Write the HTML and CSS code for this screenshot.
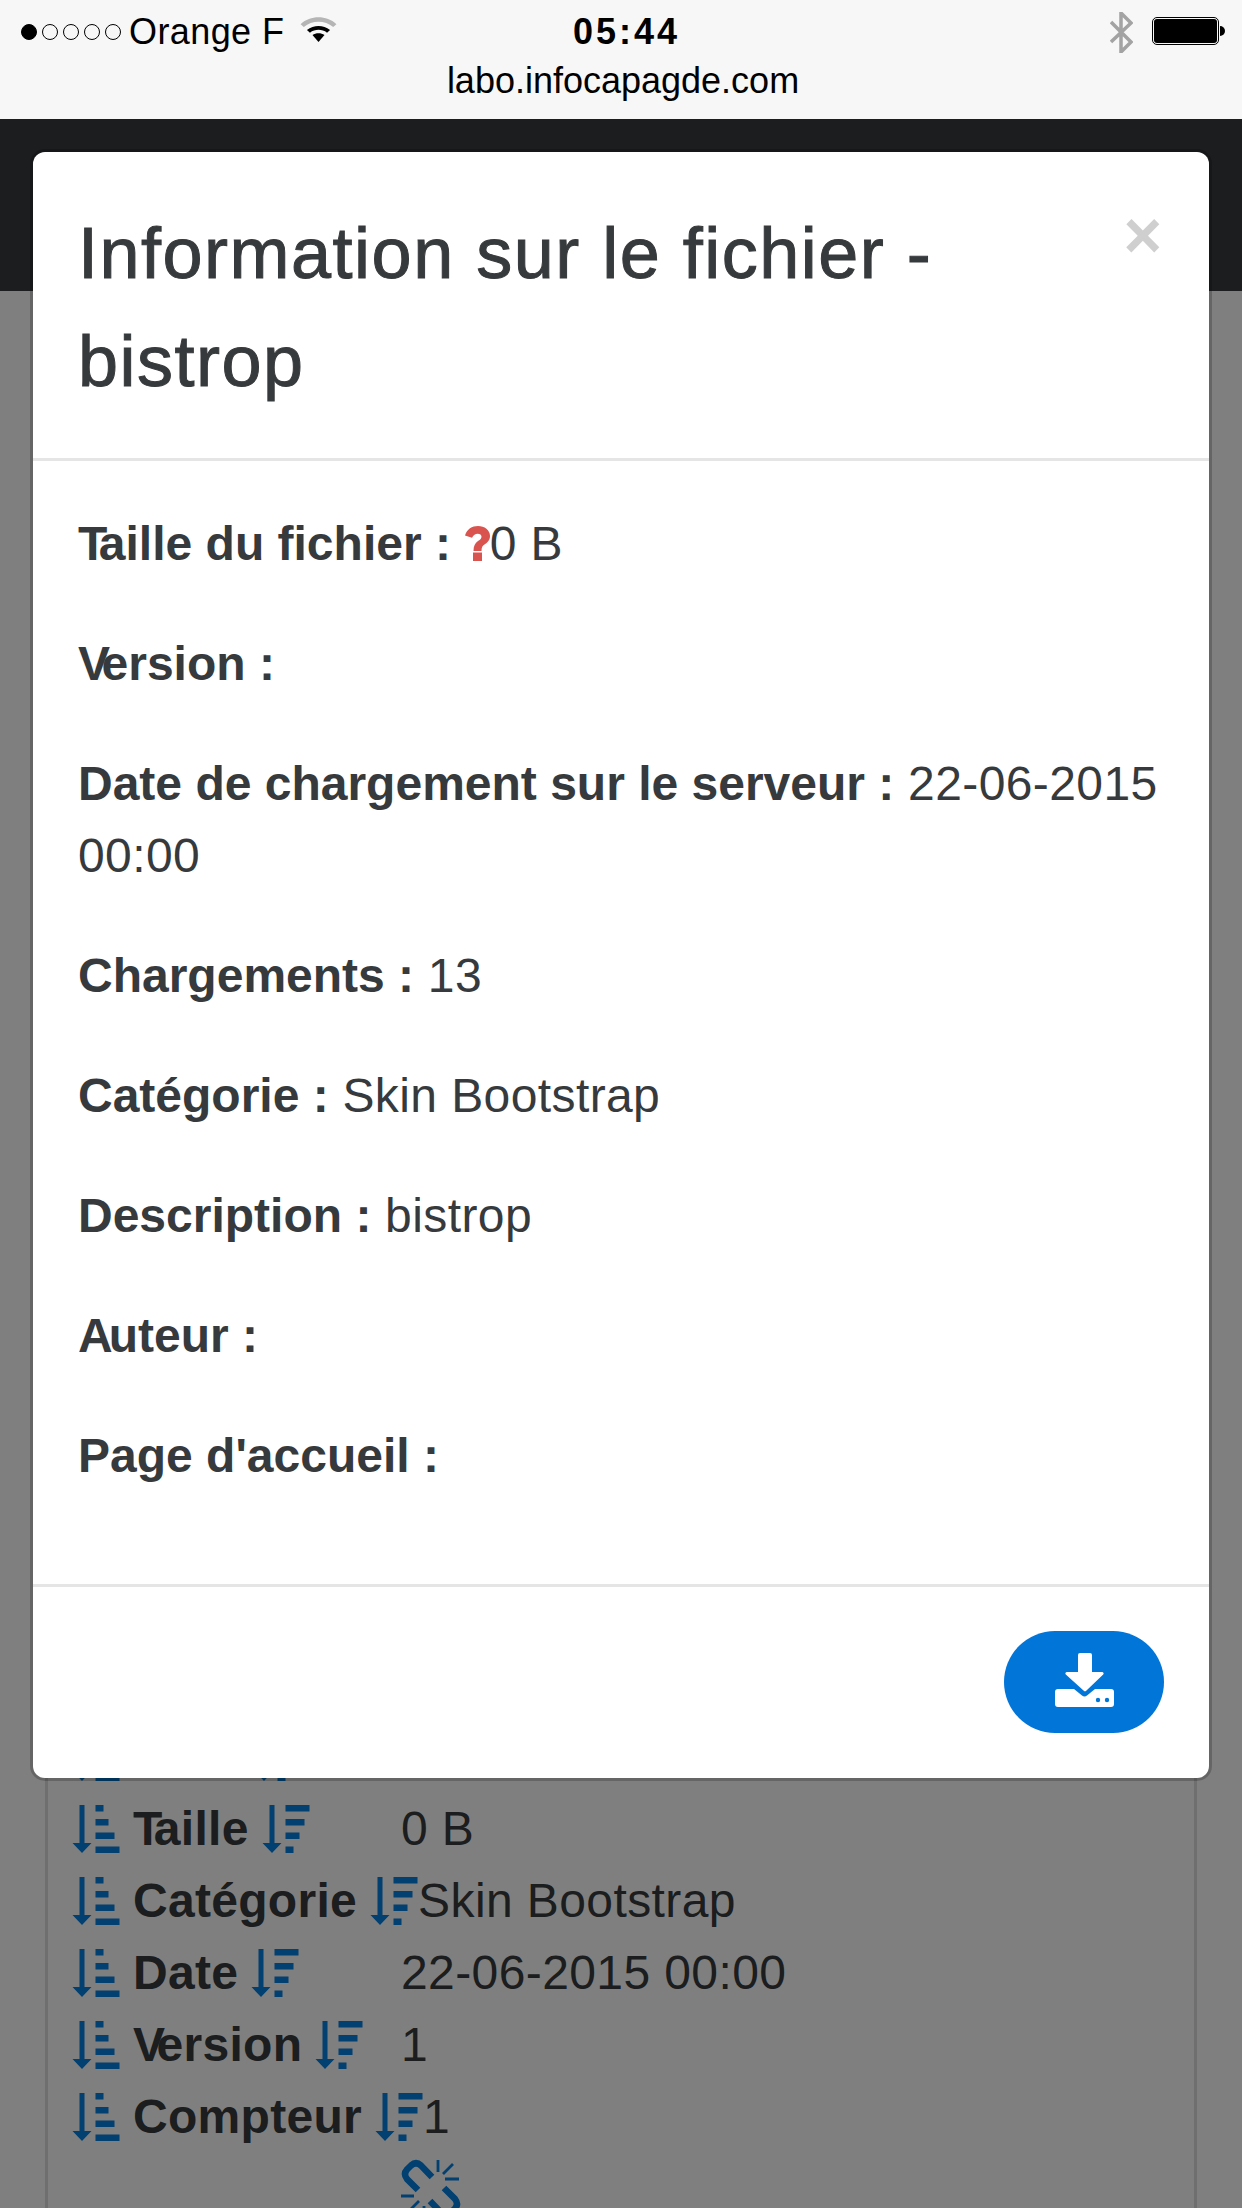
FILE: index.html
```html
<!DOCTYPE html>
<html lang="fr">
<head>
<meta charset="utf-8">
<title>Information sur le fichier</title>
<link rel="stylesheet" href="styles.css">
</head>
<body>
<svg class="defs" width="0" height="0" aria-hidden="true">
  <symbol id="sort-asc" viewBox="0 0 48 48">
    <path d="M7.500 0h5v38h7L10 48 0.500 38h7z"/>
    <path d="M23.500 0h8v6.500h-8zM23.500 14h13v6.500h-13zM23.500 27.500h19v6.500h-19zM23.500 41.500h24v6.500h-24z"/>
  </symbol>
  <symbol id="sort-desc" viewBox="0 0 48 48">
    <path d="M7.500 0h5v38h7L10 48 0.500 38h7z"/>
    <path d="M23.500 0h24v6.500h-24zM23.500 14h19v6.500h-19zM23.500 27.500h14v6.500h-14zM23.500 41.500h8v6.500h-8z"/>
  </symbol>
</svg>

<div class="statusbar">
  <div class="status-row">
    <div class="status-left">
      <span class="signal"><i class="dot on"></i><i class="dot"></i><i class="dot"></i><i class="dot"></i><i class="dot"></i></span>
      <span class="carrier">Orange F</span>
      <svg class="wifi" viewBox="0 0 32 28" preserveAspectRatio="none"><path class="wifi-off" d="M0.500 8.500C9-1 23-1 31.500 8.500l-2.800 3C21.500 4 10.500 4 3.300 11.500z"/><path d="M6 14.500c6-5.500 14-5.500 20 0l-2.600 2.800c-4.500-4-10.300-4-14.800 0z"/><path d="M10.800 19.800c3-2.500 7.400-2.500 10.400 0L16 27z"/></svg>
    </div>
    <div class="time">05:44</div>
    <div class="status-right">
      <svg class="bt" viewBox="0 0 23 41"><path d="M1 10l20 20-10 10V1l10 10L1 30" fill="none" stroke="#a3a3a3" stroke-width="3.500"/></svg>
      <span class="battery"><i class="battery-fill"></i></span><i class="battery-tip"></i>
    </div>
  </div>
  <div class="url">labo.infocapagde.com</div>
</div>

<div class="page">
  <div class="navbar"></div>
  <main class="content">
    <div class="table">
      <div class="row">
        <div class="label"><svg class="sort"><use href="#sort-asc"/></svg><b>Nom</b><svg class="sort"><use href="#sort-desc"/></svg></div>
        <div class="value"></div>
      </div>
      <div class="row">
        <div class="label"><svg class="sort"><use href="#sort-asc"/></svg><b><span class="kern">T</span>aille</b><svg class="sort"><use href="#sort-desc"/></svg></div>
        <div class="value">0 B</div>
      </div>
      <div class="row">
        <div class="label"><svg class="sort"><use href="#sort-asc"/></svg><b>Catégorie</b><svg class="sort"><use href="#sort-desc"/></svg></div>
        <div class="value">Skin Bootstrap</div>
      </div>
      <div class="row">
        <div class="label"><svg class="sort"><use href="#sort-asc"/></svg><b>Date</b><svg class="sort"><use href="#sort-desc"/></svg></div>
        <div class="value">22-06-2015 00:00</div>
      </div>
      <div class="row">
        <div class="label"><svg class="sort"><use href="#sort-asc"/></svg><b><span class="kern">V</span>ersion</b><svg class="sort"><use href="#sort-desc"/></svg></div>
        <div class="value">1</div>
      </div>
      <div class="row">
        <div class="label"><svg class="sort"><use href="#sort-asc"/></svg><b>Compteur</b><svg class="sort"><use href="#sort-desc"/></svg></div>
        <div class="value">1</div>
      </div>
      <div class="row">
        <div class="label"></div>
        <div class="value"><svg class="unlink" viewBox="0 0 60 60"><g fill="none" stroke="currentColor" stroke-width="6.500"><path d="M31 18L20 6.500Q15 2 10 6.500L6 10.500Q2 15 6 20L17 31"/><path d="M29 42L40 53.500Q45 58 50 53.500L54 49.500Q58 45 54 40L43 29"/></g><g fill="none" stroke="currentColor" stroke-width="2.800"><path d="M37 1v12M52 5L42 15M44 20H58M-1 37H13M8 52L18 42M23 59V47"/></g></svg></div>
      </div>
    </div>
  </main>
  <div class="backdrop"></div>
</div>

<section class="modal">
  <header class="modal-header">
    <h1 class="modal-title">Information sur le fichier - bistrop</h1>
    <span class="close">×</span>
  </header>
  <div class="modal-body">
    <p><b><span class="kern">T</span>aille du fichier :</b> <svg class="question" viewBox="0 0 25 35"><path d="M0 9.500C2 3 7 0 13 0c6.500 0 12 4 12 10 0 4-2.500 6.500-5.500 8.500-2 1.300-3 2.800-3 6.500H8.500c0-5 1.500-8 4.500-10 2.500-1.500 3.500-2.800 3.500-4.300 0-1.800-1.500-3-3.800-3-2.500 0-4.200 1.500-5.700 4zM8 26.500h9V35H8z"/></svg>0 B</p>
    <p><b><span class="kern">V</span>ersion :</b></p>
    <p><b>Date de chargement sur le serveur :</b> 22-06-2015 00:00</p>
    <p><b>Chargements :</b> 13</p>
    <p><b>Catégorie :</b> Skin Bootstrap</p>
    <p><b>Description :</b> bistrop</p>
    <p><b><span class="kern-a">A</span>uteur :</b></p>
    <p><b>Page d'accueil :</b></p>
  </div>
  <footer class="modal-footer">
    <button class="download" type="button" aria-label="Télécharger">
      <svg viewBox="0 0 59 54"><path d="M25 0h10a2 2 0 0 1 2 2v17h10c1.500 0 2.200 1.500 1.200 2.500L31.200 37.800c-.7.7-1.700.7-2.400 0L10.800 21.500c-1-1-.3-2.500 1.200-2.500h11V2a2 2 0 0 1 2-2z"/><path d="M3 36H19l8 6.500c1.500 1.200 3.500 1.200 5 0l8-6.500H56a3 3 0 0 1 3 3v12a3 3 0 0 1-3 3H3a3 3 0 0 1-3-3V39a3 3 0 0 1 3-3z"/><circle class="led" cx="43" cy="47" r="2.200"/><circle class="led" cx="52" cy="47" r="2.200"/></svg>
    </button>
  </footer>
</section>
</body>
</html>
```
FILE: styles.css
```css
html, body {
  margin: 0;
  padding: 0;
}
body {
  position: relative;
  width: 1242px;
  height: 2208px;
  overflow: hidden;
  font-family: "Liberation Sans", Arial, sans-serif;
  background: #fff;
  color: #373a3c;
}
.defs {
  position: absolute;
}

/* iOS chrome */
.statusbar {
  height: 119px;
  background: #f7f7f7;
  color: #000;
  box-sizing: border-box;
  padding: 11px 17px 0 21px;
}
.status-row {
  display: grid;
  grid-template-columns: 1fr auto 1fr;
  align-items: center;
  height: 42px;
}
.status-left {
  display: flex;
  align-items: center;
}
.signal {
  display: flex;
  gap: 5px;
}
.dot {
  width: 14px;
  height: 14px;
  border: 1px solid #000;
  border-radius: 50%;
}
.dot.on {
  background: #000;
}
.carrier {
  font-size: 36px;
  letter-spacing: .4px;
  margin-left: 8px;
}
.wifi {
  width: 37px;
  height: 27px;
  margin-left: 16px;
  margin-top: -5px;
}
.wifi-off {
  fill: #b5b5b5;
}
.time {
  font-size: 36px;
  font-weight: 700;
  letter-spacing: 3px;
  padding-left: 7px;
}
.status-right {
  display: flex;
  align-items: center;
  justify-content: flex-end;
}
.bt {
  width: 23px;
  height: 41px;
  margin-right: 19px;
}
.battery {
  display: block;
  width: 67px;
  height: 28px;
  border: 1px solid #000;
  border-radius: 5px;
  padding: 1px;
  box-sizing: border-box;
  margin-top: -2px;
}
.battery-fill {
  display: block;
  height: 100%;
  background: #000;
  border-radius: 3px;
}
.battery-tip {
  width: 5px;
  height: 10px;
  margin-left: 1px;
  margin-top: -2px;
  background: #000;
  border-radius: 0 5px 5px 0;
}
.url {
  text-align: center;
  font-size: 36px;
  line-height: 40px;
  margin-top: 8px;
}

/* dimmed page */
.page {
  position: relative;
  height: 2089px;
  overflow: hidden;
}
.navbar {
  height: 172px;
  background: #373a3c;
}
.content {
  padding: 1430px 45px 0;
}
.table {
  border-left: 3px solid #dedede;
  border-right: 3px solid #dedede;
  padding: 0 0 0 24px;
  font-size: 48px;
  line-height: 72px;
}
.row {
  display: flex;
  height: 72px;
}
.label {
  display: flex;
  align-items: center;
  gap: 13px;
  min-width: 329px;
  white-space: nowrap;
}
.label b {
  letter-spacing: .3px;
}
.kern {
  letter-spacing: -8.500px;
}
.kern-a {
  letter-spacing: -4px;
}
.value {
  white-space: nowrap;
  letter-spacing: .4px;
}
.sort {
  width: 48px;
  height: 48px;
  fill: #0280e0;
  flex: none;
}
.unlink {
  display: block;
  width: 60px;
  height: 60px;
  color: #0280e0;
  margin-top: 6px;
}
.backdrop {
  position: absolute;
  inset: 0;
  background: rgba(0, 0, 0, .5);
}

/* modal */
.modal {
  position: absolute;
  left: 33px;
  top: 152px;
  width: 1176px;
  height: 1626px;
  box-sizing: border-box;
  display: flex;
  flex-direction: column;
  background: #fff;
  border-radius: 12px;
  box-shadow: 0 0 0 3px rgba(0, 0, 0, .2);
}
.modal-header {
  position: relative;
  height: 309px;
  box-sizing: border-box;
  padding: 47px 45px 0;
  border-bottom: 3px solid #e5e5e5;
}
.modal-title {
  margin: 0;
  width: 940px;
  font-size: 72px;
  font-weight: 400;
  letter-spacing: 1.500px;
  -webkit-text-stroke: 1px #373a3c;
  line-height: 108px;
}
.close {
  position: absolute;
  right: 47px;
  top: 47px;
  font-size: 66px;
  line-height: 72px;
  font-weight: 700;
  color: #cfcfcf;
}
.modal-body {
  flex: 1;
  padding: 47px 45px 0;
  font-size: 48px;
  line-height: 72px;
  letter-spacing: .4px;
}
.modal-body b {
  letter-spacing: 0;
}
.modal-body p {
  margin: 0 0 48px;
}
.question {
  width: 25px;
  height: 35px;
  fill: #d9534f;
  vertical-align: -1px;
}
.modal-footer {
  height: 194px;
  box-sizing: border-box;
  padding: 44px 45px 0;
  display: flex;
  justify-content: flex-end;
  border-top: 3px solid #e5e5e5;
}
.download {
  width: 160px;
  height: 102px;
  border: 0;
  padding: 0 0 4px;
  border-radius: 51px;
  background: #0275d8;
  display: flex;
  align-items: center;
  justify-content: center;
}
.download svg {
  width: 59px;
  height: 54px;
  fill: #fff;
}
.download .led {
  fill: #0275d8;
}
```
